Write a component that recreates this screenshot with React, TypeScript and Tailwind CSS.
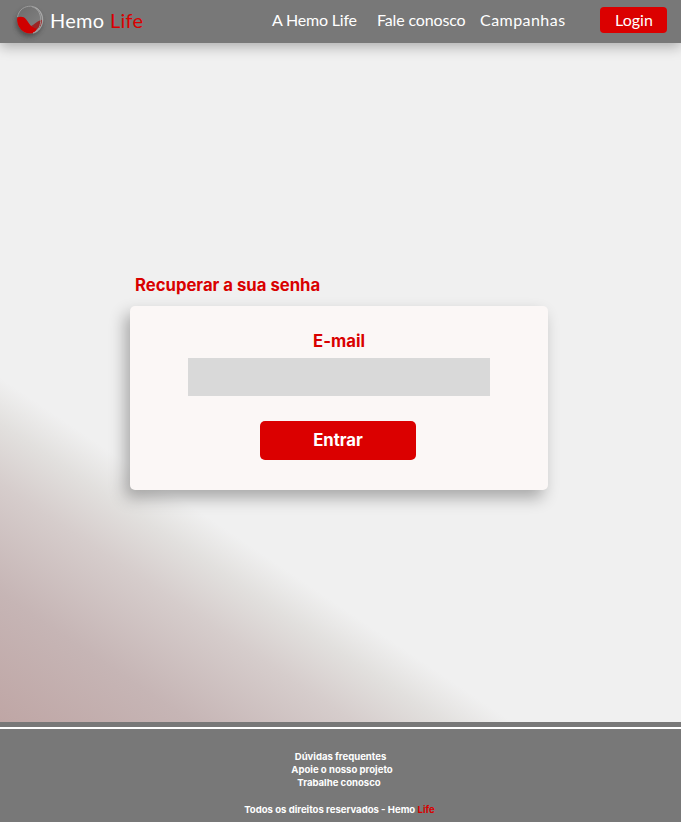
import React from 'react';

function Logo() {
  return (
    <svg className="ml-[12px] mt-px h-[42px] w-[37px] shrink-0" viewBox="0 0 37 42">
      <defs>
        <filter id="soft" x="-40%" y="-40%" width="180%" height="180%">
          <feGaussianBlur stdDeviation="2.6" />
        </filter>
        <clipPath id="drop">
          <ellipse cx="18" cy="18.8" rx="12.9" ry="13.7" />
        </clipPath>
        <linearGradient id="glass" x1="0" y1="0" x2="1" y2="1">
          <stop offset="0" stopColor="#6c6c6c" />
          <stop offset="1" stopColor="#858585" />
        </linearGradient>
      </defs>
      <ellipse cx="17" cy="22" rx="13" ry="13.5" fill="#333" opacity="0.6" filter="url(#soft)" />
      <ellipse cx="18" cy="18.8" rx="12.9" ry="13.7" fill="url(#glass)" />
      <g clipPath="url(#drop)">
        <path d="M4 17 C8 15.3 11.5 15.3 14 18.2 C16 20.8 18 24.6 20.3 25.6 L25.5 27 C24 30 22 32 20 33 H4Z" fill="#d00000" />
        <path d="M19.3 25 C22.5 23.5 25.5 19.5 31 18.5 C31 23 28.5 26 26 27.5 C24 28 21.5 26.8 19.3 25Z" fill="#9c2626" />
        <path d="M20 5.8 C31 8 32 28 21 32" fill="none" stroke="#a8a8a8" strokeOpacity="0.8" strokeWidth="1" />
        <path d="M23 6.3 C33 11 33 26 24 31.3" fill="none" stroke="#b4b4b4" strokeWidth="1.1" />
      </g>
      <path d="M5.5 16 C7 8 13 5.2 18.5 5.2 C26 5.4 31 12 30.8 19 C30.6 25 27 31 21 32.2" fill="none" stroke="#a5a5a5" strokeWidth="0.8" />
    </svg>
  );
}

export default function App() {
  return (
    <div className="flex h-[822px] w-[681px] flex-col overflow-hidden bg-[#f0f0f0] font-['Inter',sans-serif]">
      <header className="z-10 flex h-[43px] shrink-0 items-start bg-[#787878] font-['Lato',sans-serif] text-[16px] leading-[24px] text-white shadow-[0_4px_12px_rgba(0,0,0,0.28)]">
        <Logo />
        <div className="ml-[1px] mt-[8px] w-[222px] whitespace-nowrap text-[20px] tracking-[0.3px]">
          Hemo <span className="text-[#d90000]">Life</span>
        </div>
        <nav className="flex whitespace-nowrap pt-[8px]">
          <a className="w-[105px] tracking-[-0.2px]">A Hemo Life</a>
          <a className="w-[103px] tracking-[-0.15px]">Fale conosco</a>
          <a className="w-[120px] tracking-[0.45px]">Campanhas</a>
        </nav>
        <button className="mt-[7px] h-[26px] w-[67px] rounded-[4px] bg-[#db0000] pl-[1px]">Login</button>
      </header>

      <main className="flex h-[679px] shrink-0 flex-col bg-[linear-gradient(33.9deg,#bfa6a5_0px,#c6b5b5_107px,#d6cdcc_198px,#e2e0de_248px,#f0f0f0_286px)] pl-[130px] pt-[230px]">
        <h1 className="ml-[5px] h-[33px] text-[16.7px] font-bold leading-[24px] text-[#d90000]">Recuperar a sua senha</h1>
        <form className="flex h-[184px] w-[418px] flex-col items-center rounded-[5px] bg-[#fbf7f6] pt-[23px] shadow-[-5px_8px_16px_rgba(0,0,0,0.3)]">
          <label className="h-[28.5px] text-[16.7px] font-bold leading-[24px] text-[#d90000]">E-mail</label>
          <input className="h-[38.5px] w-[302px] shrink-0 bg-[#d9d9d9] outline-none" />
          <button type="button" className="mr-[2px] mt-[24.6px] h-[39px] w-[156px] shrink-0 rounded-[5px] bg-[#db0000] text-[16.7px] font-bold leading-[24px] text-white">Entrar</button>
        </form>
      </main>

      <footer className="flex h-[100px] shrink-0 flex-col bg-[#787878] pt-[5px] text-[9.55px] font-bold leading-[13.4px] text-white">
        <div className="h-[2px] shrink-0 bg-white" />
        <div className="flex flex-col items-center pt-[20.5px]">
          <a>Dúvidas frequentes</a>
          <a className="pl-[3px]">Apoie o nosso projeto</a>
          <a className="pr-[3px]">Trabalhe conosco</a>
          <p className="mr-[2px] mt-[13px]">Todos os direitos reservados - Hemo <span className="text-[#d90000]">Life</span></p>
        </div>
      </footer>
    </div>
  );
}
